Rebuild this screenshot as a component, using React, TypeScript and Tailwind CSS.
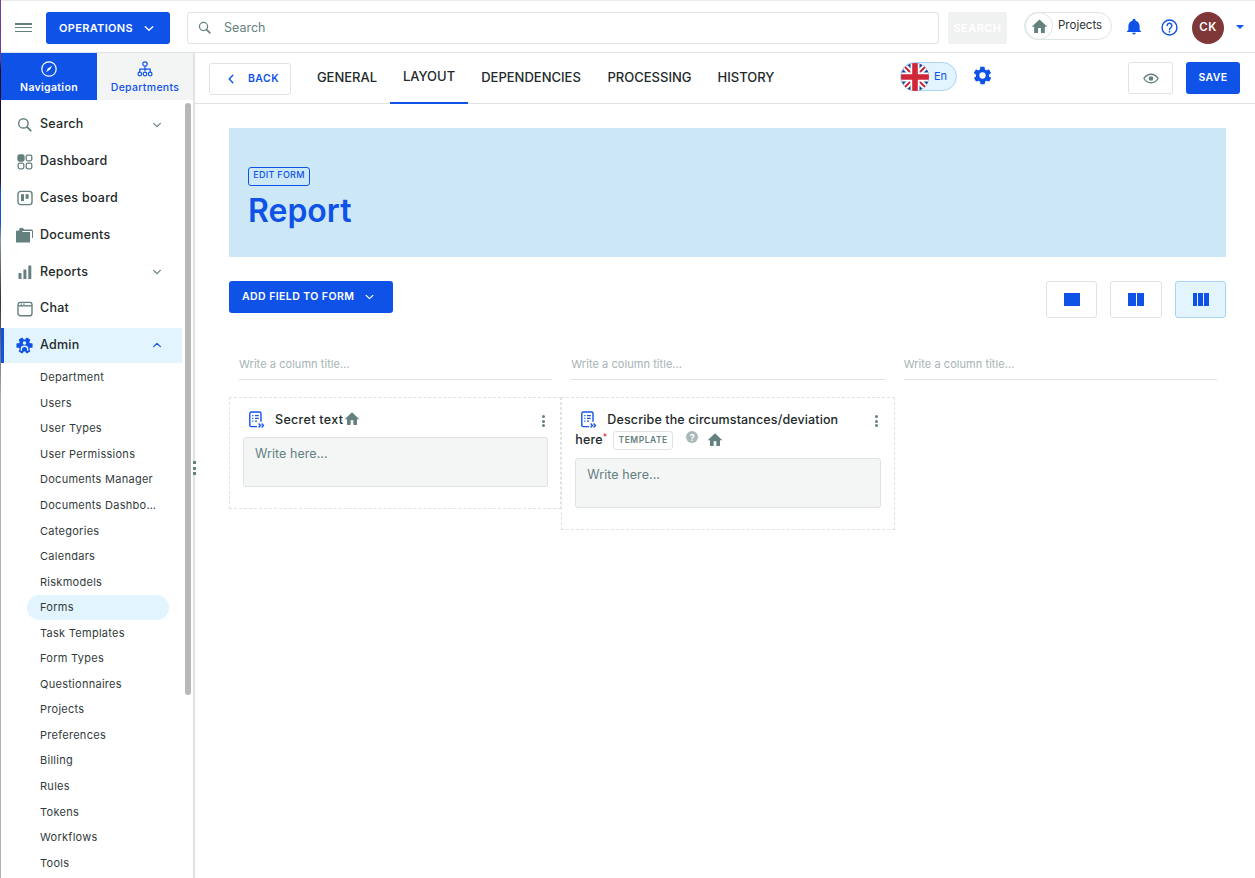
import type { ReactNode } from "react";

const BLUE = "#0f52e8";

/* ————— Icônes ————— */

function Chevron({ up = false, className = "" }: { up?: boolean; className?: string }) {
  return (
    <svg viewBox="0 0 12 8" className={className} fill="none" stroke="currentColor" strokeWidth="1.6" strokeLinecap="round" strokeLinejoin="round">
      <path d={up ? "M1.5 6.2 6 1.8l4.5 4.4" : "M1.5 1.8 6 6.2l4.5-4.4"} />
    </svg>
  );
}

function House({ className = "" }: { className?: string }) {
  return (
    <svg viewBox="0 0 24 24" className={className} fill="currentColor">
      <path d="M10 21v-7h4v7h5.5v-8.5H23L12 2 1 12.5h3.5V21z" />
    </svg>
  );
}

function FieldIcon({ className = "" }: { className?: string }) {
  return (
    <svg viewBox="0 0 18 18" className={className} fill="none" stroke="#1554e8">
      <path d="M9 15.6H3.2a1.4 1.4 0 0 1-1.4-1.4V2.4A1.4 1.4 0 0 1 3.2 1h8.4A1.4 1.4 0 0 1 13 2.4v8.4" strokeWidth="1.4" />
      <path d="M4.2 4.6h1.2M7 4.6h3.8M4.2 7.4h1.2M7 7.4h3.8M4.2 10.2h1.2M7 10.2h2" strokeWidth="1.3" />
      <path d="m10.6 12.6 1.8 1.9-1.8 1.9M13.6 12.6l1.8 1.9-1.8 1.9" strokeWidth="1.4" />
    </svg>
  );
}

function SearchIcon({ className = "" }: { className?: string }) {
  return (
    <svg viewBox="0 0 16 16" className={className} fill="none" stroke="currentColor" strokeWidth="1.5" strokeLinecap="round">
      <circle cx="6.8" cy="6.8" r="5" />
      <path d="m10.6 10.6 4 4" strokeWidth="2" />
    </svg>
  );
}

function DashboardIcon() {
  return (
    <svg viewBox="0 0 16 16" className="h-[16px] w-[16px] text-[#64807f]" fill="none" stroke="currentColor" strokeWidth="1.3">
      <rect x="1" y="1" width="6" height="6" rx="1.5" fill="currentColor" />
      <rect x="9.2" y="1.2" width="5.6" height="5.6" rx="1.5" />
      <rect x="1.2" y="9.2" width="5.6" height="5.6" rx="1.5" />
      <rect x="9.2" y="9.2" width="5.6" height="5.6" rx="1.5" />
    </svg>
  );
}

function BoardIcon() {
  return (
    <svg viewBox="0 0 16 16" className="h-[16px] w-[16px] text-[#64807f]" fill="none" stroke="currentColor" strokeWidth="1.4">
      <rect x="1" y="1.4" width="14" height="13.2" rx="2.6" />
      <rect x="4" y="4.2" width="3" height="6.8" fill="currentColor" stroke="none" />
      <rect x="8.6" y="4.2" width="3" height="4.6" fill="currentColor" stroke="none" />
    </svg>
  );
}

function FolderIcon() {
  return (
    <svg viewBox="0 0 17 15" className="h-[15px] w-[17px] text-[#64807f]" fill="currentColor">
      <path d="M3.4 0h3.4l1.3 1.6h7.4a1.5 1.5 0 0 1 1.5 1.5v7h-1V3H3.4z" />
      <path d="M1.4 2.4h4l1.4 1.6h7.3V14.6H0V3.8a1.4 1.4 0 0 1 1.4-1.4z" />
    </svg>
  );
}

function BarsIcon() {
  return (
    <svg viewBox="0 0 14 14" className="h-[14px] w-[14px] text-[#64807f]" fill="currentColor">
      <rect x="0.5" y="8" width="3" height="6" rx="0.5" />
      <rect x="5.4" y="4.4" width="3" height="9.6" rx="0.5" />
      <rect x="10.3" y="0.4" width="3" height="13.6" rx="0.5" />
    </svg>
  );
}

function ChatIcon() {
  return (
    <svg viewBox="0 0 16 16" className="h-[16px] w-[16px] text-[#64807f]" fill="none" stroke="currentColor" strokeWidth="1.4">
      <rect x="1" y="1.4" width="14" height="13.4" rx="2.4" />
      <path d="M1.2 4.8h13.6" />
      <path d="M3.6 3.2h1.4M6.2 3.2h1.4" strokeWidth="1.2" />
    </svg>
  );
}

function AdminIcon() {
  return (
    <svg viewBox="0 0 24 24" className="h-[17px] w-[17px]">
      <g fill={BLUE}>
        <circle cx="12" cy="12" r="8.4" />
        {[0, 60, 120, 180, 240, 300].map((a) => (
          <rect key={a} x="8.8" y="0.6" width="6.4" height="6" rx="1.2" transform={`rotate(${a + 30} 12 12)`} />
        ))}
      </g>
      <circle cx="12" cy="8.6" r="2.5" fill="#e2f4fd" />
      <path d="M7.6 19.5v-3c0-2 2-3.4 4.400-3.400s4.400 1.400 4.400 3.400v3" fill="none" stroke="#e2f4fd" strokeWidth="1.9" />
    </svg>
  );
}

function Flag() {
  return (
    <svg viewBox="0 0 28 28" className="h-[28px] w-[28px]">
      <defs>
        <clipPath id="rond">
          <circle cx="14" cy="14" r="14" />
        </clipPath>
      </defs>
      <g clipPath="url(#rond)">
        <rect width="28" height="28" fill="#1f4690" />
        <path d="M0 0 28 28M28 0 0 28" stroke="#fff" strokeWidth="6" />
        <path d="M0 0 28 28M28 0 0 28" stroke="#d0263a" strokeWidth="2" />
        <path d="M14 0v28M0 14h28" stroke="#fff" strokeWidth="9" />
        <path d="M14 0v28M0 14h28" stroke="#d0263a" strokeWidth="5.6" />
      </g>
    </svg>
  );
}

/* ————— Barre du haut ————— */

function Entete() {
  return (
    <header className="flex h-[53px] shrink-0 items-start border-t border-b border-t-[#e9e9ef] border-b-[#dfe3e3] bg-white">
      <div className="mt-[22px] ml-[14px] flex h-[9px] w-[17px] flex-col justify-between">
        <span className="h-[1.5px] bg-[#64807f]" />
        <span className="h-[1.5px] bg-[#64807f]" />
        <span className="h-[1.5px] bg-[#64807f]" />
      </div>
      <button className="mt-[11px] ml-[14px] flex h-[32px] w-[124px] items-center gap-[11px] rounded-[3px] bg-[#0f52e8] pl-[13px] text-[11px] font-semibold tracking-[0.03em] text-white">
        OPERATIONS
        <Chevron className="h-[7px] w-[10px]" />
      </button>
      <div className="mt-[11px] ml-[17px] flex h-[32px] w-[752px] items-center rounded-[3px] border border-[#dfe3e3] pl-[10px]">
        <SearchIcon className="h-[13px] w-[13px] -translate-y-px text-[#64807f]" />
        <span className="ml-[13px] pt-[1px] text-[12.5px] text-[#64807f]">Search</span>
      </div>
      <button className="mt-[11px] ml-[9px] flex h-[32px] w-[59px] items-center justify-center rounded-[3px] bg-[#f0f2f2] text-[11px] font-semibold tracking-[0.04em] text-white">
        SEARCH
      </button>
      <div className="mt-[11px] ml-[17px] flex h-[28px] w-[88px] items-center rounded-full border border-[#dfe3e3]">
        <span className="flex h-[28px] w-[28px] items-center justify-center rounded-full border border-[#dfe3e3] text-[#64807f]">
          <House className="h-[17px] w-[17px]" />
        </span>
        <span className="ml-[5px] text-[11.5px] text-[#2b3435]">Projects</span>
      </div>
      <svg viewBox="0 0 24 24" className="mt-[17px] ml-[13px] h-[18px] w-[18px]" fill={BLUE}>
        <path d="M12 22a2.4 2.4 0 0 0 2.4-2.4H9.6A2.4 2.4 0 0 0 12 22zm7.5-6V11c0-3.6-2-6.4-5.4-7.2V3a2.1 2.1 0 0 0-4.2 0v.8C6.5 4.6 4.5 7.4 4.5 11v5L2.5 18v.8h19V18z" />
      </svg>
      <svg viewBox="0 0 18 18" className="mt-[18px] ml-[18px] h-[17px] w-[17px]" fill="none" stroke={BLUE} strokeWidth="1.5">
        <circle cx="9" cy="9" r="7.9" />
        <path d="M6.5 7a2.5 2.5 0 1 1 4 2c-.9.7-1.5 1.1-1.5 2.3" strokeLinecap="round" />
        <circle cx="9" cy="13.6" r="0.9" fill={BLUE} stroke="none" />
      </svg>
      <span className="mt-[11px] ml-[14px] flex h-[32px] w-[32px] items-center justify-center rounded-full bg-[#7f3737] text-[11.5px] font-semibold tracking-[0.04em] text-white">
        CK
      </span>
      <span className="mt-[24px] ml-[12px] h-0 w-0 border-x-[4px] border-t-[4px] border-x-transparent border-t-[#0f52e8]" />
    </header>
  );
}

/* ————— Navigation latérale ————— */

const SOUS_MENU = [
  "Department",
  "Users",
  "User Types",
  "User Permissions",
  "Documents Manager",
  "Documents Dashbo…",
  "Categories",
  "Calendars",
  "Riskmodels",
  "Forms",
  "Task Templates",
  "Form Types",
  "Questionnaires",
  "Projects",
  "Preferences",
  "Billing",
  "Rules",
  "Tokens",
  "Workflows",
  "Tools",
];

function Ligne({ icone, titre, fleche }: { icone: ReactNode; titre: string; fleche?: boolean }) {
  return (
    <div className="flex h-[36.8px] items-center">
      <span className="flex w-[39px] shrink-0 justify-center pl-[8px]">{icone}</span>
      <span className="text-[12.5px] font-medium tracking-[0.02em] text-[#22292a]">{titre}</span>
      {fleche && <Chevron className="mr-[20px] ml-auto h-[6px] w-[10px] text-[#64807f]" />}
    </div>
  );
}

function Laterale() {
  return (
    <aside className="relative flex w-[194px] shrink-0 flex-col overflow-hidden border-r-[2px] border-r-[#dfe3e3]">
      <div className="flex h-[47px] shrink-0">
        <div className="flex w-[96px] flex-col items-center justify-center gap-[3px] bg-[#0f52e8] pt-[4px] text-white">
          <svg viewBox="0 0 16 16" className="h-[16px] w-[16px]" fill="none" stroke="currentColor" strokeWidth="1.2">
            <circle cx="8" cy="8" r="7.2" />
            <path d="m11.2 4.8-4 2.4-2.4 4 4-2.4z" fill="currentColor" stroke="none" />
          </svg>
          <span className="text-[10.5px] font-semibold tracking-[0.03em]">Navigation</span>
        </div>
        <div className="flex w-[96px] flex-col items-center justify-center gap-[3px] bg-[#f3f5f5] pt-[4px] text-[#0f52e8]">
          <svg viewBox="0 0 16 16" className="h-[16px] w-[16px]" fill="none" stroke="currentColor" strokeWidth="1.2">
            <circle cx="8" cy="3" r="2.2" />
            <path d="M8 5.2v5M2.8 11V8.2h10.4V11M8 8.2" />
            <circle cx="2.8" cy="13" r="1.8" />
            <circle cx="8" cy="13" r="1.8" />
            <circle cx="13.2" cy="13" r="1.8" />
          </svg>
          <span className="text-[10.5px] font-medium tracking-[0.03em]">Departments</span>
        </div>
      </div>

      <nav className="flex-1 pt-[6.4px] pr-[11px]">
        <Ligne icone={<SearchIcon className="h-[15px] w-[15px] text-[#64807f]" />} titre="Search" fleche />
        <Ligne icone={<DashboardIcon />} titre="Dashboard" />
        <Ligne icone={<BoardIcon />} titre="Cases board" />
        <Ligne icone={<FolderIcon />} titre="Documents" />
        <Ligne icone={<BarsIcon />} titre="Reports" fleche />
        <Ligne icone={<ChatIcon />} titre="Chat" />
        <div className="mt-[0.6px] flex h-[35px] items-center border-l-[3px] border-l-[#0f52e8] bg-[#e2f4fd]">
          <span className="flex w-[36px] shrink-0 justify-center pl-[5px]">
            <AdminIcon />
          </span>
          <span className="text-[12.5px] font-medium tracking-[0.02em] text-[#22292a]">Admin</span>
          <Chevron up className="mr-[20px] ml-auto h-[6px] w-[10px] text-[#0f52e8]" />
        </div>
        <ul className="mt-[2px] pr-[13px] pl-[26px]">
          {SOUS_MENU.map((nom) => (
            <li
              key={nom}
              className={`flex h-[25.56px] items-center rounded-full pl-[13px] text-[11px] tracking-[0.025em] whitespace-nowrap text-[#323b3c] ${
                nom === "Forms" ? "bg-[#e2f4fd]" : ""
              }`}
            >
              {nom}
            </li>
          ))}
        </ul>
      </nav>

      <div className="absolute top-[50px] right-[2px] h-[592px] w-[6px] rounded-full bg-[#b8b8b8]" />
    </aside>
  );
}

/* ————— Barre d'outils du formulaire ————— */

const ONGLETS = [
  { nom: "GENERAL", largeur: "w-[86px]" },
  { nom: "LAYOUT", largeur: "w-[78px]" },
  { nom: "DEPENDENCIES", largeur: "w-[126px]" },
  { nom: "PROCESSING", largeur: "w-[111px]" },
  { nom: "HISTORY", largeur: "w-[82px]" },
];

function Outils() {
  return (
    <div className="flex h-[51px] shrink-0 items-start border-b border-b-[#dfe3e3] pl-[14px]">
      <button className="mt-[10px] flex h-[32px] w-[82px] items-center rounded-[3px] border border-[#dfe3e3] pl-[16px] text-[10.5px] font-semibold tracking-[0.04em] text-[#0f52e8]">
        <Chevron className="h-[10px] w-[10px] rotate-90" />
        <span className="ml-[12px]">BACK</span>
      </button>
      <div className="ml-[13px] flex h-[51px]">
        {ONGLETS.map((o) => (
          <div
            key={o.nom}
            className={`flex h-[51px] items-center justify-center pb-[1px] text-[13px] font-medium text-[#22292a] ${o.largeur} ${
              o.nom === "LAYOUT" ? "border-b-[2px] border-b-[#0f52e8]" : ""
            }`}
          >
            {o.nom}
          </div>
        ))}
      </div>
      <div className="mt-[9px] ml-[113px] flex h-[29px] w-[57px] items-center rounded-full border border-[#a9d4f5] bg-[#e2f4fd]">
        <Flag />
        <span className="ml-[5px] text-[11px] text-[#0f52e8]">En</span>
      </div>
      <svg viewBox="0 0 24 24" className="mt-[12px] ml-[15px] h-[21px] w-[21px]" fill={BLUE}>
        <path d="M19.4 13c.1-.3.1-.7.1-1s0-.7-.1-1l2.1-1.6c.2-.2.2-.4.1-.6l-2-3.5c-.1-.2-.4-.3-.6-.2l-2.5 1c-.5-.4-1.1-.7-1.7-1l-.4-2.6c0-.3-.2-.5-.5-.5h-4c-.3 0-.5.2-.5.5l-.4 2.6c-.6.3-1.1.6-1.7 1l-2.5-1c-.2-.1-.5 0-.6.2l-2 3.5c-.1.2-.1.5.1.6L4.6 11c-.1.3-.1.7-.1 1s0 .7.1 1l-2.1 1.6c-.2.2-.2.4-.1.6l2 3.5c.1.2.4.3.6.2l2.5-1c.5.4 1.1.7 1.7 1l.4 2.6c0 .3.2.5.5.5h4c.3 0 .5-.2.5-.5l.4-2.6c.6-.3 1.1-.6 1.7-1l2.5 1c.2.1.5 0 .6-.2l2-3.5c.1-.2.1-.5-.1-.6zM12 15.6a3.6 3.6 0 1 1 0-7.2 3.6 3.6 0 0 1 0 7.2z" />
      </svg>
      <button className="mt-[9px] ml-[135px] flex h-[32px] w-[45px] items-center justify-center rounded-[3px] border border-[#dfe3e3] text-[#64807f]">
        <svg viewBox="0 0 18 12" className="h-[11px] w-[16px]" fill="none" stroke="currentColor" strokeWidth="1.5">
          <path d="M1 6c2-3.2 4.800-4.800 8-4.800S15 2.800 17 6c-2 3.200-4.800 4.800-8 4.800S3 9.200 1 6z" />
          <circle cx="9" cy="6" r="2.600" fill="currentColor" stroke="none" />
        </svg>
      </button>
      <button className="mt-[9px] ml-[13px] flex h-[32px] w-[54px] items-center justify-center rounded-[3px] bg-[#0f52e8] text-[10.5px] font-semibold tracking-[0.04em] text-white">
        SAVE
      </button>
    </div>
  );
}

/* ————— Contenu ————— */

function Colonnes({ n }: { n: number }) {
  return (
    <span className="flex h-[13px] w-[16px] gap-px">
      {Array.from({ length: n }).map((_, i) => (
        <span key={i} className="flex-1 bg-[#0f52e8]" />
      ))}
    </span>
  );
}

function ChampTexte() {
  return (
    <div className="h-[50px] rounded-[3px] border border-[#dfe3e3] bg-[#f4f6f6] px-[11px] pt-[8px] text-[12.5px] leading-[15px] tracking-[0.005em] text-[#64807f]">
      Write here...
    </div>
  );
}

function Points() {
  return (
    <span className="flex h-[12px] w-[3px] flex-col justify-between">
      <span className="h-[3px] w-[3px] rounded-full bg-[#64807f]" />
      <span className="h-[3px] w-[3px] rounded-full bg-[#64807f]" />
      <span className="h-[3px] w-[3px] rounded-full bg-[#64807f]" />
    </span>
  );
}

function Contenu() {
  return (
    <div className="flex-1 overflow-hidden pt-[24px] pr-[29px] pl-[34px]">
      <section className="h-[129px] bg-[#cce8f6] pt-[39px] pl-[19px]">
        <span className="block h-[19px] w-[62px] rounded-[3px] border border-[#0f52e8] text-center text-[9px] leading-[14px] font-medium tracking-[0.03em] text-[#0f52e8]">
          EDIT FORM
        </span>
        <h1 className="mt-[6px] text-[32px] leading-[37px] font-semibold text-[#0f52e8]">Report</h1>
      </section>

      <div className="mt-[24px] flex items-start justify-between">
        <button className="flex h-[32px] w-[164px] items-center gap-[11px] rounded-[3px] bg-[#0f52e8] pl-[13px] text-[10.5px] font-semibold tracking-[0.04em] text-white">
          ADD FIELD TO FORM
          <Chevron className="h-[6px] w-[9px]" />
        </button>
        <div className="flex gap-[13px]">
          <button className="flex h-[37px] w-[51px] items-center justify-center rounded-[3px] border border-[#dfe3e3]">
            <Colonnes n={1} />
          </button>
          <button className="flex h-[37px] w-[52px] items-center justify-center rounded-[3px] border border-[#dfe3e3]">
            <Colonnes n={2} />
          </button>
          <button className="flex h-[37px] w-[51px] items-center justify-center rounded-[3px] border border-[#a9d4f5] bg-[#e2f4fd]">
            <Colonnes n={3} />
          </button>
        </div>
      </div>

      <div className="mt-[35px] grid grid-cols-3">
        {[0, 1, 2].map((i) => (
          <div key={i} className="pr-[9px] pl-[10px]">
            <div className="h-[27px] border-b border-b-[#dfe3e3] text-[11px] leading-[23px] tracking-[0.005em] text-[#a6b4b4]">
              Write a column title...
            </div>
          </div>
        ))}
      </div>

      <div className="mt-[17px] grid grid-cols-3 items-start">
        <div className="h-[112px] border border-dashed border-[#dfe3e3] pt-[13px] pr-[12px] pl-[13px]">
          <div className="flex h-[26px] items-start">
            <FieldIcon className="ml-[5px] h-[18px] w-[18px]" />
            <span className="ml-[9px] text-[12.5px] leading-[18px] font-medium tracking-[0.025em] text-[#22292a]">
              Secret text
            </span>
            <House className="ml-[1px] h-[16px] w-[16px] text-[#64807f]" />
            <span className="mt-[4px] mr-[3px] ml-auto">
              <Points />
            </span>
          </div>
          <ChampTexte />
        </div>

        <div className="h-[133px] w-[334px] border border-dashed border-[#dfe3e3] px-[13px] pt-[13px]">
          <div className="flex items-start">
            <FieldIcon className="ml-[5px] h-[18px] w-[18px] shrink-0" />
            <span className="ml-[9px] text-[12.5px] leading-[18px] font-medium tracking-[0.01em] text-[#22292a]">
              Describe the circumstances/deviation
            </span>
            <span className="mt-[4px] mr-[3px] ml-auto">
              <Points />
            </span>
          </div>
          <div className="mt-[1px] flex h-[28px] items-start">
            <span className="text-[12.5px] leading-[19px] font-medium tracking-[0.01em] text-[#22292a]">here</span>
            <span className="text-[9px] leading-[14px] text-[#d0263a]">*</span>
            <span className="mt-[1px] ml-[6px] flex h-[19px] w-[60px] items-center justify-center rounded-[3px] border border-[#dfe3e3] text-[8.5px] font-semibold tracking-[0.06em] text-[#64807f]">
              TEMPLATE
            </span>
            <span className="mt-[1px] ml-[13px] flex h-[12px] w-[12px] items-center justify-center rounded-full bg-[#a9b8b8] text-[9px] leading-none font-bold text-white">
              ?
            </span>
            <House className="mt-[2px] ml-[9px] h-[16px] w-[16px] text-[#64807f]" />
          </div>
          <ChampTexte />
        </div>
      </div>
    </div>
  );
}

export default function App() {
  return (
    <div className="flex h-[878px] w-[1255px] overflow-hidden bg-[#b8b8b8] font-['Inter',sans-serif]">
      <div className="h-full w-px shrink-0 bg-[linear-gradient(180deg,#7a3f9a_0px,#6b3a90_60px,#120820_70px,#2a1240_180px,#1250d0_192px,#1250d0_222px,#8a9aa5_240px,#333_300px,#b0b0b0_400px)]" />
      <div className="relative flex min-w-0 flex-1 flex-col bg-white">
        <Entete />
        <div className="flex min-h-0 flex-1">
          <Laterale />
          <main className="flex min-w-0 flex-1 flex-col">
            <Outils />
            <Contenu />
          </main>
        </div>
        <span className="absolute top-[461px] left-[192px] flex h-[14px] w-[3px] flex-col justify-between bg-white">
          <span className="h-[3px] bg-[#64807f]" />
          <span className="h-[3px] bg-[#64807f]" />
          <span className="h-[3px] bg-[#64807f]" />
        </span>
      </div>
    </div>
  );
}
